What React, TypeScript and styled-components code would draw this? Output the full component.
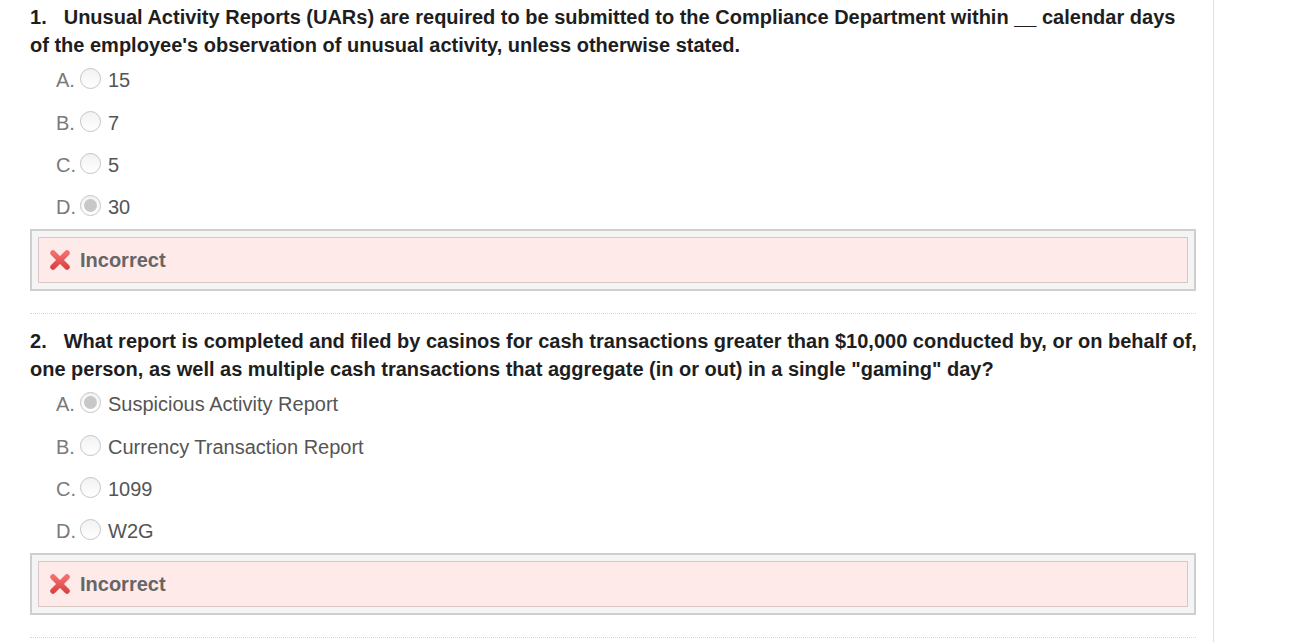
import React from 'react';
import styled, { createGlobalStyle } from 'styled-components';

interface Question {
  number: number;
  text: string;
  options: string[];
  selected: number;
  correct: boolean;
}

const GlobalStyle = createGlobalStyle`
  html, body {
    margin: 0;
    padding: 0;
    background: #fff;
    font-family: "Liberation Sans", Arial, sans-serif;
  }
`;

const Page = styled.div`
  width: 1214px;
  height: 642px;
  overflow: hidden;
  border-right: 1px solid #e0e0e0;
  box-sizing: border-box;
  padding: 0 17px 0 30px;
`;

const Block = styled.div`
  padding-top: 3px;
`;

const QuestionText = styled.div`
  margin-right: -1px;
  font-size: 20px;
  line-height: 28px;
  font-weight: 700;
  color: #1e1e1e;
`;

const Num = styled.span`
  display: inline-block;
  margin-right: 17px;
`;

const OptionList = styled.div`
  display: flex;
  flex-direction: column;
  padding-left: 26px;
  margin-top: 0.5px;
`;

const OptionRow = styled.label`
  display: flex;
  align-items: center;
  height: 42.4px;
  font-size: 20px;
  color: #555;
`;

const Letter = styled.span`
  color: #7a7a7a;
  width: 24px;
`;

const Radio = styled.span<{ $checked: boolean }>`
  position: relative;
  width: 19px;
  height: 19px;
  margin-right: 7px;
  margin-top: -4px;
  border-radius: 50%;
  border: 1px solid #c4c4c4;
  background: linear-gradient(#f2f2f2, #fff);
  box-sizing: content-box;

  &::after {
    content: '';
    display: ${(p) => (p.$checked ? 'block' : 'none')};
    position: absolute;
    left: 3px;
    top: 3px;
    width: 13px;
    height: 13px;
    border-radius: 50%;
    background: #c8c8c8;
  }
`;

const Feedback = styled.div`
  border: 2px solid #cfcfcf;
  background: #f4f4f4;
  padding: 6px;
`;

const FeedbackInner = styled.div`
  display: flex;
  align-items: center;
  gap: 9px;
  height: 44px;
  padding-left: 10px;
  border: 1px solid #d9c6c6;
  background: #ffeaea;
  font-size: 20px;
  font-weight: 700;
  color: #666;
`;

const Separator = styled.div`
  margin-top: 22px;
  margin-bottom: 10px;
  border-top: 1px dotted #d8d8d8;
`;

const questions: Question[] = [
  {
    number: 1,
    text: 'Unusual Activity Reports (UARs) are required to be submitted to the Compliance Department within __ calendar days of the employee\'s observation of unusual activity, unless otherwise stated.',
    options: ['15', '7', '5', '30'],
    selected: 3,
    correct: false,
  },
  {
    number: 2,
    text: 'What report is completed and filed by casinos for cash transactions greater than $10,000 conducted by, or on behalf of, one person, as well as multiple cash transactions that aggregate (in or out) in a single "gaming" day?',
    options: ['Suspicious Activity Report', 'Currency Transaction Report', '1099', 'W2G'],
    selected: 0,
    correct: false,
  },
];

const CrossIcon = () => (
  <svg width="22" height="22" viewBox="0 0 22 22">
    <defs>
      <linearGradient id="xg" x1="0" y1="0" x2="0" y2="1">
        <stop offset="0" stopColor="#f26e6e" />
        <stop offset="1" stopColor="#dd4545" />
      </linearGradient>
    </defs>
    <path d="M4 4 L18 18 M18 4 L4 18" stroke="url(#xg)" strokeWidth="5.5" strokeLinecap="round" />
  </svg>
);

const App: React.FC = () => {
  return (
    <Page>
      <GlobalStyle />
      {questions.map((q) => (
        <Block key={q.number}>
          <QuestionText>
            <Num>{q.number}.</Num>
            {q.text}
          </QuestionText>
          <OptionList>
            {q.options.map((opt, i) => (
              <OptionRow key={i}>
                <Letter>{String.fromCharCode(65 + i)}.</Letter>
                <Radio $checked={i === q.selected} />
                {opt}
              </OptionRow>
            ))}
          </OptionList>
          <Feedback>
            <FeedbackInner>
              <CrossIcon />
              {q.correct ? 'Correct' : 'Incorrect'}
            </FeedbackInner>
          </Feedback>
          <Separator />
        </Block>
      ))}
    </Page>
  );
};

export default App;
